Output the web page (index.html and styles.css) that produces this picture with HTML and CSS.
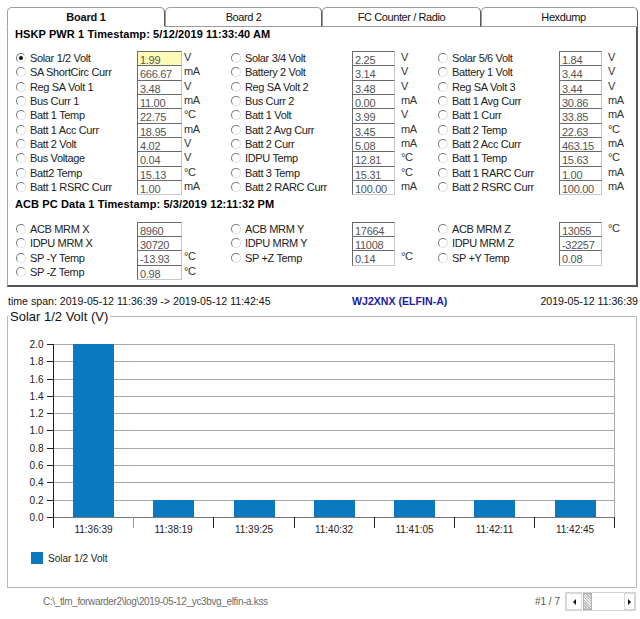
FILE: index.html
```html
<!DOCTYPE html>
<html>
<head>
<meta charset="utf-8">
<title>Board 1</title>
<link rel="stylesheet" href="styles.css">
</head>
<body>
<div class="app">
  <div class="tabs">
    <div class="tab active">Board 1</div>
    <div class="tab t2">Board 2</div>
    <div class="tab t3">FC Counter / Radio</div>
    <div class="tab t4">Hexdump</div>
  </div>
  <div class="panel">
    <div class="hdr">HSKP PWR 1 Timestamp: 5/12/2019 11:33:40 AM</div>
    <div class="grid main">
      <label class="opt"><i class="rb on"></i>Solar 1/2 Volt</label><span class="val sel">1.99</span><span class="u c1">V</span>
      <label class="opt"><i class="rb"></i>Solar 3/4 Volt</label><span class="val">2.25</span><span class="u">V</span>
      <label class="opt"><i class="rb"></i>Solar 5/6 Volt</label><span class="val">1.84</span><span class="u">V</span>

      <label class="opt"><i class="rb"></i>SA ShortCirc Curr</label><span class="val">666.67</span><span class="u c1">mA</span>
      <label class="opt"><i class="rb"></i>Battery 2 Volt</label><span class="val">3.14</span><span class="u">V</span>
      <label class="opt"><i class="rb"></i>Battery 1 Volt</label><span class="val">3.44</span><span class="u">V</span>

      <label class="opt"><i class="rb"></i>Reg SA Volt 1</label><span class="val">3.48</span><span class="u c1">V</span>
      <label class="opt"><i class="rb"></i>Reg SA Volt 2</label><span class="val">3.48</span><span class="u">V</span>
      <label class="opt"><i class="rb"></i>Reg SA Volt 3</label><span class="val">3.44</span><span class="u">V</span>

      <label class="opt"><i class="rb"></i>Bus Curr 1</label><span class="val">11.00</span><span class="u c1">mA</span>
      <label class="opt"><i class="rb"></i>Bus Curr 2</label><span class="val">0.00</span><span class="u">mA</span>
      <label class="opt"><i class="rb"></i>Batt 1 Avg Curr</label><span class="val">30.86</span><span class="u">mA</span>

      <label class="opt"><i class="rb"></i>Batt 1 Temp</label><span class="val">22.75</span><span class="u c1">°C</span>
      <label class="opt"><i class="rb"></i>Batt 1 Volt</label><span class="val">3.99</span><span class="u">V</span>
      <label class="opt"><i class="rb"></i>Batt 1 Curr</label><span class="val">33.85</span><span class="u">mA</span>

      <label class="opt"><i class="rb"></i>Batt 1 Acc Curr</label><span class="val">18.95</span><span class="u c1">mA</span>
      <label class="opt"><i class="rb"></i>Batt 2 Avg Curr</label><span class="val">3.45</span><span class="u">mA</span>
      <label class="opt"><i class="rb"></i>Batt 2 Temp</label><span class="val">22.63</span><span class="u">°C</span>

      <label class="opt"><i class="rb"></i>Batt 2 Volt</label><span class="val">4.02</span><span class="u c1">V</span>
      <label class="opt"><i class="rb"></i>Batt 2 Curr</label><span class="val">5.08</span><span class="u">mA</span>
      <label class="opt"><i class="rb"></i>Batt 2 Acc Curr</label><span class="val">463.15</span><span class="u">mA</span>

      <label class="opt"><i class="rb"></i>Bus Voltage</label><span class="val">0.04</span><span class="u c1">V</span>
      <label class="opt"><i class="rb"></i>IDPU Temp</label><span class="val">12.81</span><span class="u">°C</span>
      <label class="opt"><i class="rb"></i>Batt 1 Temp</label><span class="val">15.63</span><span class="u">°C</span>

      <label class="opt"><i class="rb"></i>Batt2 Temp</label><span class="val">15.13</span><span class="u c1">°C</span>
      <label class="opt"><i class="rb"></i>Batt 3 Temp</label><span class="val">15.31</span><span class="u">°C</span>
      <label class="opt"><i class="rb"></i>Batt 1 RARC Curr</label><span class="val">1.00</span><span class="u">mA</span>

      <label class="opt"><i class="rb"></i>Batt 1 RSRC Curr</label><span class="val">1.00</span><span class="u c1">mA</span>
      <label class="opt"><i class="rb"></i>Batt 2 RARC Curr</label><span class="val">100.00</span><span class="u">mA</span>
      <label class="opt"><i class="rb"></i>Batt 2 RSRC Curr</label><span class="val">100.00</span><span class="u">mA</span>
    </div>

    <div class="hdr acb">ACB PC Data 1 Timestamp: 5/3/2019 12:11:32 PM</div>
    <div class="grid acbgrid">
      <label class="opt"><i class="rb"></i>ACB MRM X</label><span class="val">8960</span><span class="u c1"></span>
      <label class="opt"><i class="rb"></i>ACB MRM Y</label><span class="val">17664</span><span class="u"></span>
      <label class="opt"><i class="rb"></i>ACB MRM Z</label><span class="val">13055</span><span class="u">°C</span>

      <label class="opt"><i class="rb"></i>IDPU MRM X</label><span class="val">30720</span><span class="u c1"></span>
      <label class="opt"><i class="rb"></i>IDPU MRM Y</label><span class="val">11008</span><span class="u"></span>
      <label class="opt"><i class="rb"></i>IDPU MRM Z</label><span class="val">-32257</span><span class="u"></span>

      <label class="opt"><i class="rb"></i>SP -Y Temp</label><span class="val">-13.93</span><span class="u c1">°C</span>
      <label class="opt"><i class="rb"></i>SP +Z Temp</label><span class="val">0.14</span><span class="u">°C</span>
      <label class="opt"><i class="rb"></i>SP +Y Temp</label><span class="val">0.08</span><span class="u"></span>

      <label class="opt"><i class="rb"></i>SP -Z Temp</label><span class="val">0.98</span><span class="u c1">°C</span>
    </div>
  </div>

  <div class="status">
    <span class="span">time span: 2019-05-12 11:36:39 -&gt; 2019-05-12 11:42:45</span>
    <span class="call">WJ2XNX (ELFIN-A)</span>
    <span class="now">2019-05-12 11:36:39</span>
  </div>

  <fieldset class="chart">
    <legend>Solar 1/2 Volt (V)</legend>
    <svg class="plot" width="628" height="263" viewBox="8 324 628 263" xmlns="http://www.w3.org/2000/svg">
      <g class="grid-lines" stroke="#a8a8a8" stroke-width="1" fill="none">
        <line x1="53" y1="344.5" x2="615" y2="344.5"/>
        <line x1="53" y1="361.5" x2="615" y2="361.5"/>
        <line x1="53" y1="379.5" x2="615" y2="379.5"/>
        <line x1="53" y1="396.5" x2="615" y2="396.5"/>
        <line x1="53" y1="413.5" x2="615" y2="413.5"/>
        <line x1="53" y1="430.5" x2="615" y2="430.5"/>
        <line x1="53" y1="448.5" x2="615" y2="448.5"/>
        <line x1="53" y1="465.5" x2="615" y2="465.5"/>
        <line x1="53" y1="482.5" x2="615" y2="482.5"/>
        <line x1="53" y1="500.5" x2="615" y2="500.5"/>
        <line x1="614.5" y1="344" x2="614.5" y2="517"/>
      </g>
      <g fill="#0a79c0">
        <rect x="73" y="344" width="41" height="173.5"/>
        <rect x="153" y="500" width="41" height="17.5"/>
        <rect x="234" y="500" width="41" height="17.5"/>
        <rect x="314" y="500" width="41" height="17.5"/>
        <rect x="394" y="500" width="41" height="17.5"/>
        <rect x="474" y="500" width="41" height="17.5"/>
        <rect x="555" y="500" width="41" height="17.5"/>
      </g>
      <g stroke="#222" stroke-width="1" fill="none">
        <line x1="53.5" y1="344" x2="53.5" y2="518"/>
        <line x1="53" y1="517.5" x2="615" y2="517.5" stroke="#777"/>
        <line x1="47" y1="344.5" x2="53" y2="344.5"/>
        <line x1="47" y1="361.5" x2="53" y2="361.5"/>
        <line x1="47" y1="379.5" x2="53" y2="379.5"/>
        <line x1="47" y1="396.5" x2="53" y2="396.5"/>
        <line x1="47" y1="413.5" x2="53" y2="413.5"/>
        <line x1="47" y1="430.5" x2="53" y2="430.5"/>
        <line x1="47" y1="448.5" x2="53" y2="448.5"/>
        <line x1="47" y1="465.5" x2="53" y2="465.5"/>
        <line x1="47" y1="482.5" x2="53" y2="482.5"/>
        <line x1="47" y1="500.5" x2="53" y2="500.5"/>
        <line x1="47" y1="517.5" x2="53" y2="517.5"/>
        <line x1="53.5" y1="517" x2="53.5" y2="528"/>
        <line x1="133.5" y1="517" x2="133.5" y2="528" stroke="#999"/>
        <line x1="213.5" y1="517" x2="213.5" y2="528"/>
        <line x1="294.5" y1="517" x2="294.5" y2="528"/>
        <line x1="374.5" y1="517" x2="374.5" y2="528"/>
        <line x1="454.5" y1="517" x2="454.5" y2="528"/>
        <line x1="534.5" y1="517" x2="534.5" y2="528"/>
        <line x1="614.5" y1="517" x2="614.5" y2="528"/>
      </g>
      <g class="ylab" text-anchor="end">
        <text x="43.5" y="348">2.0</text>
        <text x="43.5" y="365">1.8</text>
        <text x="43.5" y="383">1.6</text>
        <text x="43.5" y="400">1.4</text>
        <text x="43.5" y="417">1.2</text>
        <text x="43.5" y="434">1.0</text>
        <text x="43.5" y="452">0.8</text>
        <text x="43.5" y="469">0.6</text>
        <text x="43.5" y="486">0.4</text>
        <text x="43.5" y="504">0.2</text>
        <text x="43.5" y="521">0.0</text>
      </g>
      <g class="xlab" text-anchor="middle">
        <text x="93.5" y="532.5">11:36:39</text>
        <text x="173.5" y="532.5">11:38:19</text>
        <text x="254" y="532.5">11:39:25</text>
        <text x="334" y="532.5">11:40:32</text>
        <text x="414.5" y="532.5">11:41:05</text>
        <text x="494.5" y="532.5">11:42:11</text>
        <text x="575" y="532.5">11:42:45</text>
      </g>
      <rect x="31" y="552" width="12" height="12" fill="#0a79c0"/>
      <text class="leg" x="48" y="562">Solar 1/2 Volt</text>
    </svg>
  </fieldset>

  <div class="footer">
    <span class="path">C:\_tlm_forwarder2\log\2019-05-12_yc3bvg_elfin-a.kss</span>
    <span class="count">#1 / 7</span>
    <div class="scroll">
      <span class="sbtn left"><i></i></span>
      <span class="thumb"></span>
      <span class="track"></span>
      <span class="sbtn right"><i></i></span>
    </div>
  </div>
</div>
</body>
</html>
```

FILE: styles.css
```css
html, body {
  margin: 0;
  padding: 0;
  background: #fff;
}
body {
  font-family: "Liberation Sans", Arial, sans-serif;
  font-size: 11px;
  color: #000;
}
.app {
  width: 640px;
  height: 619px;
  overflow: hidden;
}

/* tabs */
.tabs {
  display: flex;
  margin: 7px 0 0 7px;
  height: 20px;
}
.tab {
  box-sizing: border-box;
  height: 20px;
  border: 1px solid #9c9c9c;
  border-right-color: #5a5a5a;
  border-radius: 5px 5px 0 0;
  text-align: center;
  line-height: 18px;
  letter-spacing: -0.4px;
  background: #fff;
  color: #111;
}
.tab.active {
  width: 158px;
  font-weight: bold;
  letter-spacing: -0.2px;
  border-bottom-color: transparent;
}
.t2 { width: 157px; }
.t3 { width: 159px; }
.t4 { width: 157px; padding-left: 8px; }

/* panel */
.panel {
  box-sizing: border-box;
  margin-left: 7px;
  width: 631px;
  height: 260px;
  border-left: 1px solid #a4a4a4;
  border-right: 2px solid #555;
  border-bottom: 2px solid #555;
  padding-left: 7px;
}
.hdr {
  font-weight: bold;
  font-size: 11px;
  line-height: 13px;
  padding-top: 1px;
  letter-spacing: 0.1px;
}
.hdr.acb {
  margin-top: 4px;
  padding-top: 0;
}
.grid {
  display: grid;
  grid-template-columns: 121px 45px 49px 121px 43px 43px 121px 43px 1fr;
  grid-auto-rows: 14.33px;
  margin-left: 1px;
}
.main { margin-top: 10px; }
.acbgrid { margin-top: 10.5px; }
.opt {
  display: flex;
  align-items: center;
  letter-spacing: -0.35px;
  color: #222;
  white-space: nowrap;
}
.rb {
  box-sizing: border-box;
  width: 10px;
  height: 10px;
  border-radius: 50%;
  border: 1px solid;
  border-color: #7c7c7c #dedede #dedede #7c7c7c;
  margin-right: 4px;
  position: relative;
  flex: none;
}
.rb.on::after {
  content: "";
  position: absolute;
  left: 2px;
  top: 2px;
  width: 4px;
  height: 4px;
  border-radius: 50%;
  background: #111;
}
.val {
  box-sizing: border-box;
  height: 15.33px;
  border: 1px solid;
  border-color: #6a6a6a #c8c8c8 #c8c8c8 #6a6a6a;
  padding: 1px 0 0 2px;
  line-height: 14px;
  color: #555;
  letter-spacing: -0.3px;
  background: #fff;
  white-space: nowrap;
  overflow: hidden;
}
.val.sel { background: #fdf9b6; }
.u {
  padding-left: 6px;
  line-height: 13px;
  color: #333;
  letter-spacing: -0.3px;
}
.u.c1 { padding-left: 2px; }

/* status line */
.status {
  display: flex;
  margin-top: 8px;
  padding-left: 8px;
  height: 13px;
  line-height: 13px;
  font-size: 10.6px;
  white-space: nowrap;
}
.span { width: 344px; color: #111; }
.call { color: #1c1ca6; font-weight: bold; }
.now { margin-left: auto; margin-right: 2px; color: #111; }

/* chart */
.chart {
  margin: 1px 0 0 7px;
  padding: 0;
  width: 630px;
  box-sizing: border-box;
  border: 1px solid #b8b8b8;
  min-inline-size: 0;
}
.chart legend {
  font-size: 13px;
  line-height: 15px;
  padding: 0 2px;
  margin-left: 0;
  color: #111;
}
.plot {
  display: block;
}
.plot text {
  font-family: "Liberation Sans", Arial, sans-serif;
  font-size: 10px;
  fill: #222;
}

/* footer */
.footer {
  display: flex;
  align-items: flex-start;
  padding-top: 4px;
  padding-right: 4px;
}
.path {
  margin-left: 43px;
  margin-top: 3.5px;
  font-size: 10px;
  line-height: 12px;
  letter-spacing: -0.35px;
  color: #6c6c6c;
}
.count {
  margin-left: auto;
  margin-top: 3.5px;
  margin-right: 5px;
  font-size: 10px;
  line-height: 12px;
  color: #555;
}
.scroll {
  box-sizing: border-box;
  display: flex;
  width: 71px;
  height: 19px;
  border: 1px solid #d4d4d4;
  background: #fff;
}
.sbtn {
  display: flex;
  align-items: center;
  justify-content: center;
  box-sizing: border-box;
  border: 1px solid #d8d8d8;
  background: #fff;
}
.sbtn.left { width: 16px; }
.sbtn.right { width: 11px; }
.sbtn i {
  width: 0;
  height: 0;
  border-top: 3px solid transparent;
  border-bottom: 3px solid transparent;
}
.sbtn.left i { border-right: 3px solid #111; }
.sbtn.right i { border-left: 3px solid #111; }
.thumb {
  width: 7px;
  margin-left: 1px;
  border: 1px solid #b0b0b0;
  background: repeating-linear-gradient(45deg, #bbb 0 1px, #eee 1px 2px);
}
.track { flex: 1; }
```
